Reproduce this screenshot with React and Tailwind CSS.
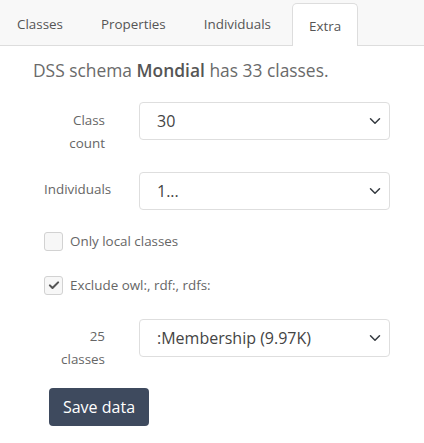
import React from "react";

const Chevron = () => (
  <svg width="12" height="12" viewBox="0 0 16 16" className="shrink-0">
    <path d="M2 5l6 6 6-6" fill="none" stroke="#343a40" strokeWidth="2" strokeLinecap="round" strokeLinejoin="round" />
  </svg>
);

const Select = ({ value }) => (
  <div className="flex h-[38px] w-[251px] items-center justify-between rounded-[4px] border border-[#dedede] bg-white pl-[17px] pr-[8px] text-[16px] text-[#444]">
    <span>{value}</span>
    <Chevron />
  </div>
);

const Check = ({ checked, label }) => (
  <div className="flex items-center gap-[7px]">
    <div className="flex h-[19px] w-[19px] items-center justify-center rounded-[3px] border border-[#d2d2d2] bg-[#f7f7f7]">
      {checked && (
        <svg width="12" height="12" viewBox="0 0 16 16">
          <path d="M2.5 8.5l3.5 3.5 7.5-7.5" fill="none" stroke="#555" strokeWidth="2.8" strokeLinecap="round" strokeLinejoin="round" />
        </svg>
      )}
    </div>
    <span className="text-[13.4px] text-[#666]">{label}</span>
  </div>
);

export default function App() {
  const tabs = ["Classes", "Properties", "Individuals", "Extra"];
  return (
    <div className="h-[443px] w-[424px] bg-white" style={{ fontFamily: '"Open Sans", sans-serif' }}>
      <div className="flex h-[46px] items-end gap-[4px] border-b border-[#dddddd] bg-[#f8f8f8]">
        {tabs.map((t) =>
          t === "Extra" ? (
            <div
              key={t}
              className="-mb-px flex h-[43px] items-center rounded-t-[5px] border border-b-0 border-[#dddddd] bg-white px-[16px] pt-[2px] text-[13.4px] text-[#555]"
            >
              {t}
            </div>
          ) : (
            <div key={t} className="flex h-[43px] items-center border border-transparent px-[16px] pt-[2px] text-[13.4px] text-[#555]">
              {t}
            </div>
          )
        )}
      </div>

      <div className="pl-[33px] pt-[11px] text-[17.4px] leading-[27px] text-[#6a6a6a]">
        DSS schema <span className="font-semibold text-[#555]">Mondial</span> has 33 classes.
      </div>

      <div className="flex flex-col pl-[44px] pt-[18px]">
        <div className="flex items-start gap-[34px]">
          <div className="w-[61px] pt-[7px] text-right text-[13.4px] leading-[23px] text-[#666]">Class count</div>
          <Select value="30" />
        </div>
        <div className="mt-[17px] flex items-start gap-[34px]">
          <div className="w-[61px] pt-[6px] text-right text-[13.4px] leading-[23px] text-[#666]">Individuals</div>
          <Select value="1..." />
        </div>
        <div className="mt-[21px]">
          <Check label="Only local classes" />
        </div>
        <div className="mt-[24px]">
          <Check checked label="Exclude owl:, rdf:, rdfs:" />
        </div>
        <div className="mt-[24px] flex items-start gap-[34px]">
          <div className="w-[61px] pt-[6px] text-right text-[13.4px] leading-[23px] text-[#666]">25 classes</div>
          <Select value=":Membership (9.97K)" />
        </div>
        <div className="ml-[5px] mt-[17px]">
          <button className="h-[38px] w-[100px] rounded-[4px] bg-[#3e4a5e] text-[16px] text-white">Save data</button>
        </div>
      </div>
    </div>
  );
}
